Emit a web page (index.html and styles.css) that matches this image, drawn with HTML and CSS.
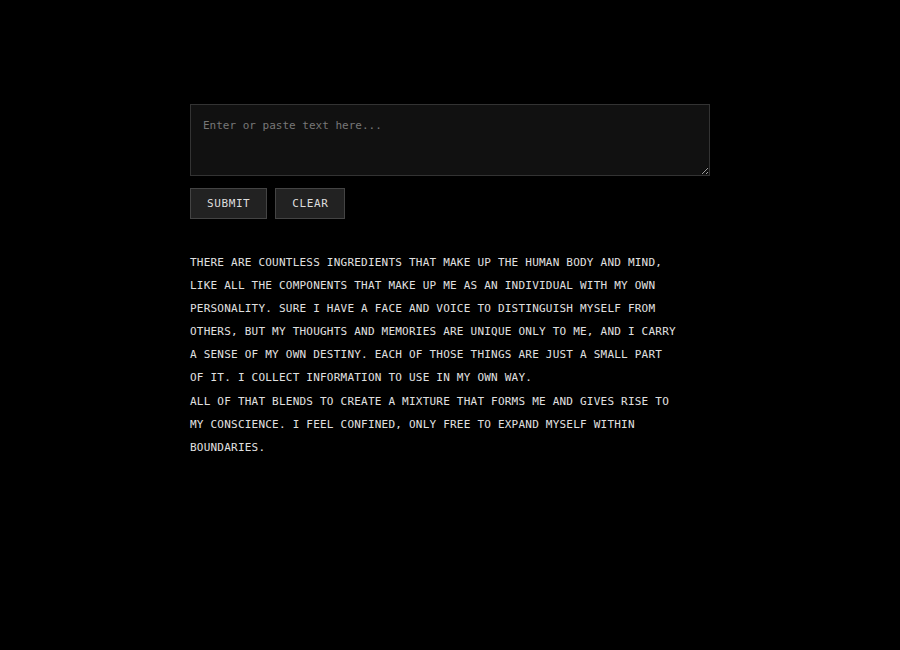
FILE: index.html
```html
<!DOCTYPE html>
<html lang="en">
<head>
  <meta charset="UTF-8" />
  <meta name="viewport" content="width=device-width, initial-scale=1.0" />
  <title>Input</title>
  <link rel="stylesheet" href="styles.css">
</head>
<body>
  <div class="container">
    <textarea id="entrada" class="entrada" placeholder="Enter or paste text here..."></textarea>
    <div class="botoes">
      <button class="botao">SUBMIT</button>
      <button class="botao">CLEAR</button>
    </div>
    <p class="saida">There are countless ingredients that make up the human body and mind, like all the components that make up me as an individual with my own personality. Sure I have a face and voice to distinguish myself from others, but my thoughts and memories are unique only to me, and I carry a sense of my own destiny. Each of those things are just a small part of it. I collect information to use in my own way.<br>All of that blends to create a mixture that forms me and gives rise to my conscience. I feel confined, only free to expand myself within boundaries.</p>
  </div>
</body>
</html>
```

FILE: styles.css
```css
* {
  margin: 0;
  padding: 0;
  box-sizing: border-box;
}
body {
  font-family: 'DejaVu Sans Mono', monospace;
  background-color: #000;
  color: #e0e0e0;
  font-size: 11px;
}
.container {
  width: 520px;
  margin: 0 auto;
  padding-top: 104px;
}
.entrada {
  display: block;
  width: 100%;
  height: 72px;
  padding: 12px;
  background: #111;
  color: #ddd;
  border: 1px solid #333;
  font-family: 'DejaVu Sans Mono', monospace;
  font-size: 11px;
  line-height: 1.7;
  outline: none;
}
.entrada::placeholder {
  color: #777;
}
.botoes {
  display: flex;
  gap: 8px;
  margin-top: 12px;
}
.botao {
  padding: 8px 16px;
  background: #222;
  color: #ddd;
  border: 1px solid #444;
  font-family: 'DejaVu Sans Mono', monospace;
  font-size: 11px;
  line-height: 13px;
  letter-spacing: 0.6px;
  cursor: pointer;
}
.saida {
  max-width: 490px;
  margin-top: 32px;
  text-transform: uppercase;
  letter-spacing: 0.22px;
  line-height: 23.1px;
}
```
